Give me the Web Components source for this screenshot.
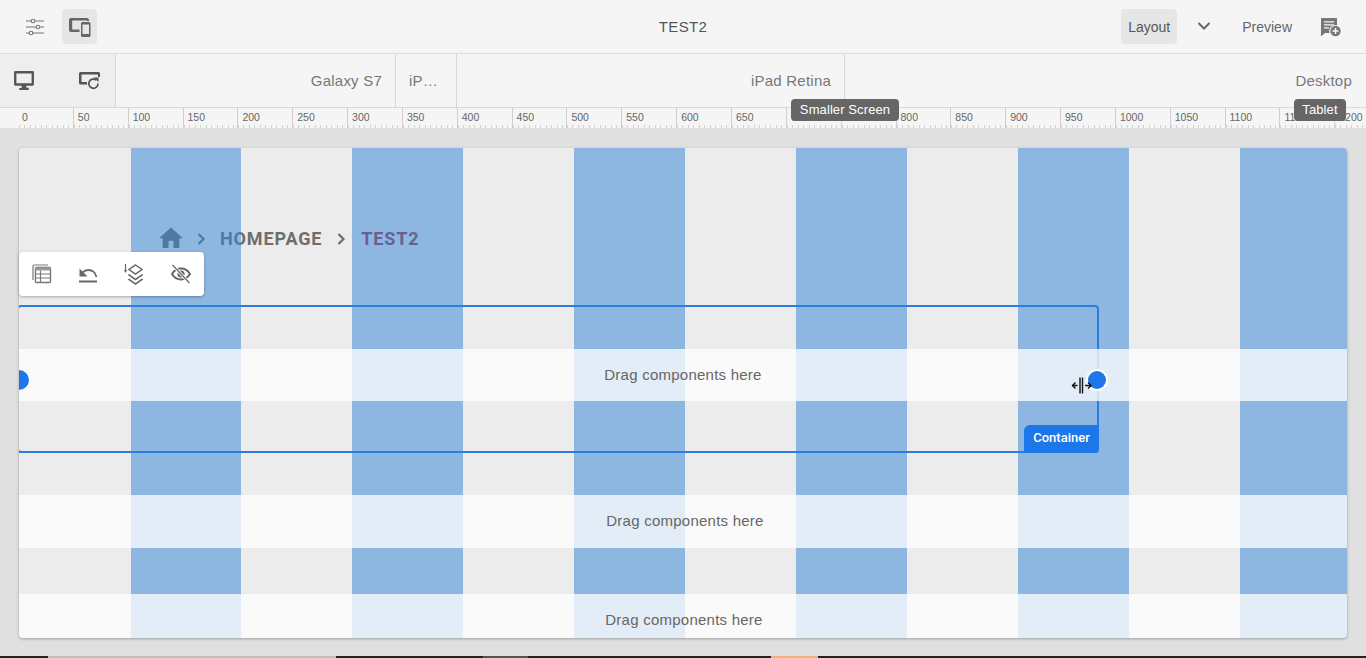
<!DOCTYPE html>
<html lang="en">
<head>
<meta charset="utf-8">
<title>TEST2</title>
<style>
    html, body { margin: 0; height: 100%; overflow: hidden; background: #e0e0e0; }
    body { font-family: "Liberation Sans", Arial, sans-serif; color: #666; }
</style>
</head>
<body>
<app-shell>
    <top-bar></top-bar>
    <device-bar></device-bar>
    <ruler-bar></ruler-bar>
    <canvas-area>
        <canvas-page>
            <bread-crumb></bread-crumb>
            <page-section pb="51" selected>
                <drop-row></drop-row>
            </page-section>
            <page-section pb="3">
                <drop-row h="53" shift="4"></drop-row>
            </page-section>
            <page-section pb="0">
                <drop-row shift="2"></drop-row>
            </page-section>
        </canvas-page>
    </canvas-area>
    <bottom-strip></bottom-strip>
    <ui-tip x="791" w="108">Smaller Screen</ui-tip>
    <ui-tip x="1294" w="52">Tablet</ui-tip>
</app-shell>

<script>
    class AppShell extends HTMLElement {
        constructor() {
            super();
            this.attachShadow({ mode: "open" });
            this.shadowRoot.innerHTML = `
            <style>
                :host { display: flex; flex-direction: column; position: relative; height: 658px; overflow: hidden; }
            </style>
            <slot></slot>`;
        }
    }
    customElements.define('app-shell', AppShell);

    class TopBar extends HTMLElement {
        constructor() {
            super();
            this.attachShadow({ mode: "open" });
            this.shadowRoot.innerHTML = `
            <style>
                :host { display: grid; grid-template-columns: 1fr auto 1fr; align-items: center; height: 53px; background: #f5f5f5; border-bottom: 1px solid #dcdcdc; padding: 0 24px 0 17px; font-size: 14px; color: #666; }
                .side { display: flex; align-items: center; }
                .right { justify-content: flex-end; }
                .btn { width: 35px; height: 35px; display: flex; align-items: center; justify-content: center; border-radius: 4px; margin-right: 10px; }
                .on { background: #e6e6e6; }
                .title { font-size: 15px; letter-spacing: .35px; color: #555; margin-left: 7px; }
                .layout { width: 56px; height: 35px; border-radius: 4px; background: #e6e6e6; display: flex; align-items: center; justify-content: center; color: #555; }
                .chev { width: 54px; display: flex; justify-content: center; margin-bottom: 2px; }
                .preview { margin-left: 11px; white-space: nowrap; color: #666; }
                .note { margin-left: 28px; display: flex; }
            </style>
            <div class="side">
                <div class="btn">
                    <svg width="20" height="20" viewBox="0 0 20 20" fill="none" stroke="#777" stroke-width="1.1">
                        <path d="M1 4h5.400M9.600 4H19M1 10h10.400M14.600 10H19M1 16h3.400M7.600 16H19"/>
                        <circle cx="8" cy="4" r="1.800"/><circle cx="13" cy="10" r="1.800"/><circle cx="6" cy="16" r="1.800"/>
                    </svg>
                </div>
                <div class="btn on">
                    <svg width="22" height="20" viewBox="0 0 22 20">
                        <path fill="#666" d="M2 1h16a2 2 0 0 1 2 2v1h-2V3.500H3.200V12.500H10.500V15H2a2 2 0 0 1-2-2V3a2 2 0 0 1 2-2z"/>
                        <path fill="#666" fill-rule="evenodd" d="M13.500 5h6.500a1.500 1.500 0 0 1 1.500 1.500v12a1.500 1.500 0 0 1-1.500 1.500h-6.500a1.500 1.500 0 0 1-1.500-1.500v-12A1.500 1.500 0 0 1 13.500 5zm0 2.500v9.500h6.500V7.500z"/>
                    </svg>
                </div>
            </div>
            <div class="title">TEST2</div>
            <div class="side right">
                <div class="layout">Layout</div>
                <div class="chev">
                    <svg width="14" height="10" viewBox="0 0 14 10" fill="none" stroke="#666" stroke-width="2"><path d="M1.500 2l5.500 5.500L12.500 2"/></svg>
                </div>
                <div class="preview">Preview</div>
                <div class="note">
                    <svg width="22" height="20" viewBox="0 0 22 20">
                        <path fill="#777" d="M1 1h16v7.200a6 6 0 0 0-7.400 7.800H5l-4 3.500z"/>
                        <path fill="#f5f5f5" d="M4 4.200h10v1.300H4zM4 7.200h10v1.300H4zM4 10.200h5v1.300H4z"/>
                        <circle cx="15.500" cy="14" r="5.200" fill="#777"/>
                        <path stroke="#f5f5f5" stroke-width="1.500" d="M15.500 11v6M12.500 14h6"/>
                    </svg>
                </div>
            </div>`;
        }
    }
    customElements.define('top-bar', TopBar);

    class DeviceBar extends HTMLElement {
        constructor() {
            super();
            this.attachShadow({ mode: "open" });
            this.shadowRoot.innerHTML = `
            <style>
                :host { display: flex; height: 53px; background: #f5f5f5; border-bottom: 1px solid #d8d8d8; font-size: 15px; letter-spacing: .22px; color: #777; }
                .left { background: #eeeeee; border-right: 1px solid #d8d8d8; display: flex; align-items: center; padding-left: 14px; width: 101px; }
                .left svg { flex: none; }
                .left svg + svg { margin-left: 45px; }
                .seg { display: flex; align-items: center; justify-content: flex-end; padding-right: 13px; border-right: 1px solid #d8d8d8; white-space: nowrap; }
                .s1 { width: 266px; } .s2 { width: 47px; justify-content: flex-start; } .s3 { width: 374px; }
                .s2 span { margin-left: 13px; }
                .s4 { flex: 1; border-right: 0; padding-right: 14px; }
            </style>
            <div class="left">
                <svg width="20" height="19" viewBox="0 0 21 20">
                    <path fill="#555" fill-rule="evenodd" d="M1.500 0h18A1.500 1.500 0 0 1 21 1.500v12.500a1.500 1.500 0 0 1-1.500 1.500H13v2h2.500V20h-10v-2H8v-2.500H1.500A1.500 1.500 0 0 1 0 14V1.500A1.500 1.500 0 0 1 1.500 0zm1 2.500v10.500h16V2.500z"/>
                </svg>
                <svg width="21" height="18" viewBox="0 0 21 18" fill="none">
                    <path fill="#555" d="M1.500 0h18A1.500 1.500 0 0 1 21 1.500V5h-2V2.500H2.500v7.500H8v2.500H1.500A1.500 1.500 0 0 1 0 11V1.500A1.500 1.500 0 0 1 1.500 0z"/>
                    <path stroke="#555" stroke-width="1.700" d="M19 11.500a4.600 4.600 0 1 1-1.700-3.400"/>
                    <path fill="#555" d="M14.500 5.500h5v4.500z"/>
                </svg>
            </div>
            <div class="seg s1">Galaxy S7</div>
            <div class="seg s2"><span>iP…</span></div>
            <div class="seg s3">iPad Retina</div>
            <div class="seg s4">Desktop</div>`;
        }
    }
    customElements.define('device-bar', DeviceBar);

    // ruler marks every 50 units, 54.85px apart on screen
    class RulerBar extends HTMLElement {
        constructor() {
            super();
            this.attachShadow({ mode: "open" });
            let marks = '';
            for (let i = 0; i <= 24; i++) {
                marks += `<div class="mark${i == 0 ? ' first' : ''}">${i * 50}</div>`;
            }
            this.shadowRoot.innerHTML = `
            <style>
                :host { display: flex; height: 20px; background: #f5f5f5; padding-left: 18px; overflow: hidden; font-size: 10.5px; color: #666; }
                .mark { flex: 0 0 54.85px; box-sizing: border-box; border-left: 1px solid #cfcfcf; padding: 3px 0 0 4px; line-height: 12px;
                    background: repeating-linear-gradient(to right, #d2d2d2 0, #d2d2d2 1px, transparent 1px, transparent 5.485px) 0 100% / 100% 3px no-repeat; }
                .first { border-left-color: transparent; padding-left: 3px; }
            </style>
            ${marks}`;
        }
    }
    customElements.define('ruler-bar', RulerBar);

    class CanvasArea extends HTMLElement {
        constructor() {
            super();
            this.attachShadow({ mode: "open" });
            this.shadowRoot.innerHTML = `
            <style>
                :host { display: block; flex: 1; background: #e0e0e0; padding: 20px 19px 0; }
            </style>
            <slot></slot>`;
        }
    }
    customElements.define('canvas-area', CanvasArea);

    class CanvasPage extends HTMLElement {
        constructor() {
            super();
            this.attachShadow({ mode: "open" });
            let cols = '';
            for (let i = 0; i < 12; i++) cols += `<i class="${i % 2 ? 'b' : 'g'}"></i>`;
            this.shadowRoot.innerHTML = `
            <style>
                :host { display: block; position: relative; height: 490px; background: #fff; border-radius: 4px; box-shadow: 0 1px 3px rgba(0,0,0,.3); }
                .clip { position: absolute; inset: 0; overflow: hidden; border-radius: 4px; }
                .cols { position: absolute; inset: 0; z-index: 1; display: grid; grid-template-columns: 112px 110px repeat(9, 111px) 1fr; pointer-events: none; }
                .g { background: rgba(0,0,0,.075); }
                .b { background: rgba(48,124,199,.55); }
                .tools { position: absolute; left: 0; top: 104px; z-index: 6; }
            </style>
            <div class="clip">
                <slot></slot>
                <div class="cols">${cols}</div>
            </div>
            <tool-box class="tools"></tool-box>`;
        }
    }
    customElements.define('canvas-page', CanvasPage);

    class BreadCrumb extends HTMLElement {
        constructor() {
            super();
            this.attachShadow({ mode: "open" });
            this.shadowRoot.innerHTML = `
            <style>
                :host { display: flex; align-items: center; height: 24px; padding: 78px 0 56px 140px; font: 700 18px Roboto, "Liberation Sans", sans-serif; letter-spacing: .85px; color: #777; }
                svg { display: block; }
                .sep { margin: 2px 14px 0 14px; }
                .sep2 { margin: 2px 15px 0 15px; }
                .last { color: #b23c4b; }
            </style>
            <svg width="24" height="24" viewBox="2 3 20 17.500"><path fill="#777" d="M10 20v-6h4v6h5v-8h3L12 3 2 12h3v8z"/></svg>
            <svg class="sep" width="9" height="12" viewBox="0 0 9 12" fill="none" stroke="#777" stroke-width="2.200"><path d="M1.500 1l5 5-5 5"/></svg>
            <span>HOMEPAGE</span>
            <svg class="sep2" width="9" height="12" viewBox="0 0 9 12" fill="none" stroke="#777" stroke-width="2.200"><path d="M1.500 1l5 5-5 5"/></svg>
            <span class="last">TEST2</span>`;
        }
    }
    customElements.define('bread-crumb', BreadCrumb);

    class ToolBox extends HTMLElement {
        constructor() {
            super();
            this.attachShadow({ mode: "open" });
            this.shadowRoot.innerHTML = `
            <style>
                :host { display: flex; width: 185px; height: 44px; background: #fff; border-radius: 4px; box-shadow: 0 1px 3px rgba(0,0,0,.3); }
                div { width: 46px; display: flex; align-items: center; justify-content: center; }
                div:last-child { width: 47px; }
            </style>
            <div>
                <svg width="20" height="20" viewBox="0 0 20 20" fill="none" stroke="#777" stroke-width="1.200">
                    <path d="M1 16V2.500A1.500 1.500 0 0 1 2.500 1H16"/>
                    <rect x="3.500" y="3.500" width="15" height="15" rx="1" stroke-width="1.400"/>
                    <path fill="#999" stroke="none" d="M3.500 3.500h15v3h-15z"/>
                    <path d="M3.500 10h15M3.500 14h15M8.500 6.500v12"/>
                </svg>
            </div>
            <div>
                <svg width="20" height="18" viewBox="0 0 20 18" fill="none" stroke="#666">
                    <path stroke-width="2" d="M1 16.500h18"/>
                    <path stroke-width="1.800" d="M18.500 12C17.500 7.500 14 5 10.500 5 8 5 6 6 4.500 7.500"/>
                    <path fill="#666" stroke="none" d="M1.500 3.500v8h8z"/>
                </svg>
            </div>
            <div>
                <svg width="20" height="22" viewBox="0 0 20 22" fill="none" stroke="#666" stroke-width="1.500">
                    <path d="M11.500 2l6.500 4.500-6.500 4.500L5 6.500z"/>
                    <path fill="#666" stroke="none" d="M5 11l6.500 4.500L18 11l1.300 1-7.800 5.500L3.700 12zM5 15.500l6.500 4.500 6.500-4.500 1.300 1-7.800 5.500-7.800-5.500z"/>
                    <path stroke-width="1.200" d="M1.500 1v7"/>
                    <path fill="#666" stroke="none" d="M0 7h3L1.500 10z"/>
                </svg>
            </div>
            <div>
                <svg width="20" height="20" viewBox="0 0 20 20" fill="none" stroke="#666">
                    <path stroke-width="2" d="M1 10c2.200-3.600 5.400-5.500 9-5.500s6.800 1.900 9 5.500c-2.200 3.600-5.400 5.500-9 5.500S3.200 13.600 1 10z"/>
                    <circle cx="10" cy="10" r="3.600" fill="#666" stroke="none"/>
                    <path stroke="#fff" stroke-width="3" d="M2 1.500l16 17"/>
                    <path stroke-width="1.200" d="M1.500 1l17 18"/>
                </svg>
            </div>`;
        }
    }
    customElements.define('tool-box', ToolBox);

    class PageSection extends HTMLElement {
        constructor() {
            super();
            this.attachShadow({ mode: "open" });
        }
        connectedCallback() {
            let sel = this.hasAttribute('selected') ? '<container-frame></container-frame>' : '';
            this.shadowRoot.innerHTML = `
            <style>
                :host { display: block; position: relative; padding: 43px 0 ${this.getAttribute('pb')}px; }
            </style>
            <slot></slot>
            ${sel}`;
        }
    }
    customElements.define('page-section', PageSection);

    class DropRow extends HTMLElement {
        constructor() {
            super();
            this.attachShadow({ mode: "open" });
        }
        connectedCallback() {
            let h = this.getAttribute('h') || 52;
            let shift = this.getAttribute('shift') || 0;
            this.shadowRoot.innerHTML = `
            <style>
                :host { display: flex; position: relative; z-index: 4; height: ${h}px; align-items: center; justify-content: center; box-sizing: border-box; padding: 0 0 2px ${shift}px; background: rgba(255,255,255,.75); font-size: 15px; letter-spacing: .24px; color: #666; }
            </style>
            Drag components here`;
        }
    }
    customElements.define('drop-row', DropRow);

    // selection frame: its outline runs under the rows, handles and label lie over them
    class ContainerFrame extends HTMLElement {
        constructor() {
            super();
            this.attachShadow({ mode: "open" });
            this.shadowRoot.innerHTML = `
            <style>
                :host { position: absolute; left: -2px; top: -1px; width: 1082px; height: 148px; }
                .line { position: absolute; inset: 0; box-sizing: border-box; z-index: 3; border: 2px solid #2b7cdf; border-radius: 4px; }
                .dot { position: absolute; z-index: 5; background: #1d77e8; border-radius: 50%; }
                .l { left: -8px; top: 65px; width: 20px; height: 20px; }
                .r { left: 1071px; top: 66px; width: 18px; height: 18px; box-shadow: 0 0 0 2px #fff; }
                .tag { position: absolute; z-index: 5; right: 0; bottom: 0; width: 75px; height: 28px; background: #1d77e8; color: #fff; border-radius: 6px 0 4px 0; font: 500 13px/26px Roboto, "Liberation Sans", sans-serif; text-align: center; }
                svg { position: absolute; z-index: 5; left: 1054px; top: 72px; }
            </style>
            <div class="line"></div>
            <div class="dot l"></div>
            <div class="dot r"></div>
            <svg width="22" height="17" viewBox="0 0 22 17" fill="none" stroke="#111" stroke-width="1.400">
                <path d="M9 0.500v16M11.500 0.500v16M1.500 8.500h5M14 8.500h6"/>
                <path d="M4.500 5.500l-3 3 3 3M17 5.500l3 3-3 3"/>
            </svg>
            <div class="tag">Container</div>`;
        }
    }
    customElements.define('container-frame', ContainerFrame);

    class UiTip extends HTMLElement {
        constructor() {
            super();
            this.attachShadow({ mode: "open" });
        }
        connectedCallback() {
            this.shadowRoot.innerHTML = `
            <style>
                :host { position: absolute; left: ${this.getAttribute('x')}px; top: 99px; width: ${this.getAttribute('w')}px; height: 22px; box-sizing: border-box; padding-bottom: 2px; display: flex; align-items: center; justify-content: center; background: #666; color: #fff; border-radius: 4px; font-size: 13px; letter-spacing: .1px; white-space: nowrap; }
            </style>
            <slot></slot>`;
        }
    }
    customElements.define('ui-tip', UiTip);

    // the taskbar edge that shows at the foot of the frame
    class BottomStrip extends HTMLElement {
        constructor() {
            super();
            this.attachShadow({ mode: "open" });
            this.shadowRoot.innerHTML = `
            <style>
                :host { display: flex; height: 2px; flex: none; background: #222; }
                i { display: block; }
            </style>
            <i style="width:48px"></i>
            <i style="width:288px;background:#bdbdbd"></i>
            <i style="width:147px"></i>
            <i style="width:45px;background:#555"></i>
            <i style="width:243px"></i>
            <i style="width:47px;background:#f0b27a"></i>`;
        }
    }
    customElements.define('bottom-strip', BottomStrip);
</script>
</body>
</html>
